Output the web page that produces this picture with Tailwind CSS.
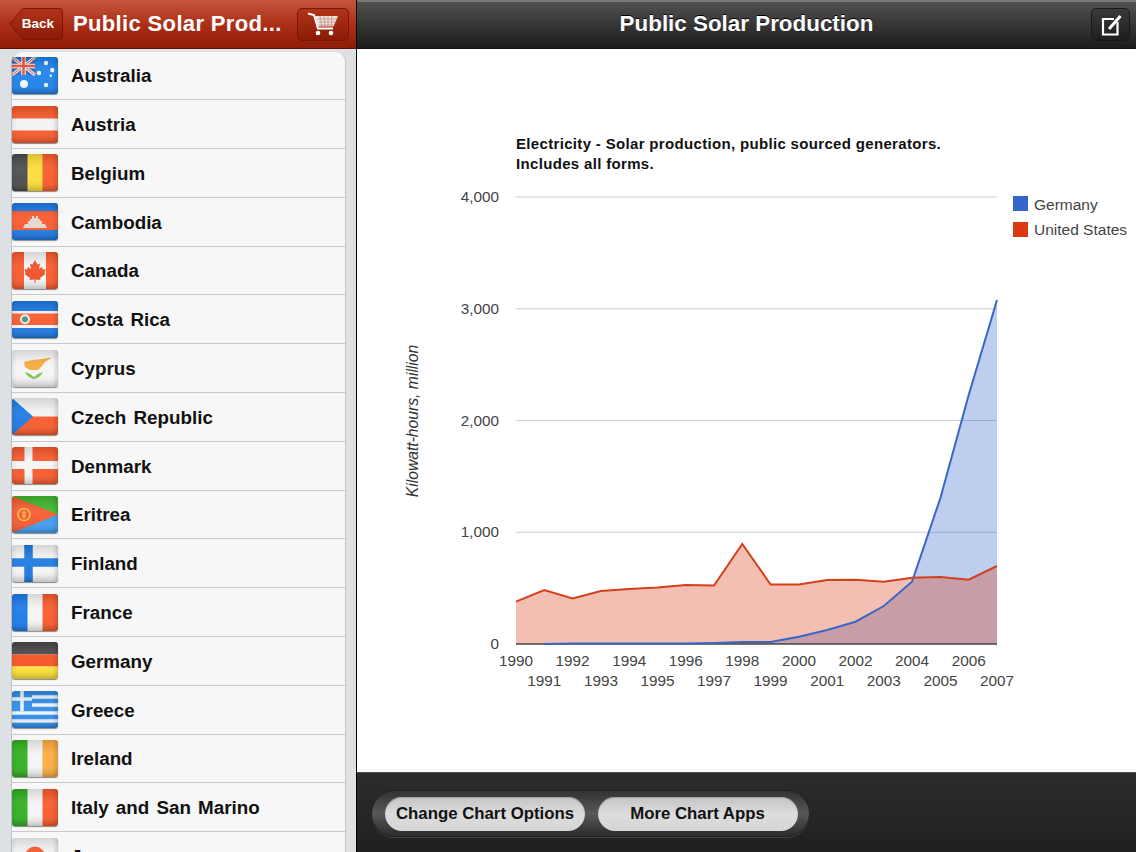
<!DOCTYPE html>
<html lang="en">
<head>
<meta charset="utf-8">
<title>Public Solar Production</title>
<script src="https://cdn.jsdelivr.net/npm/@tailwindcss/browser@4"></script>
</head>
<body class="bg-black">
<svg class="absolute w-0 h-0" aria-hidden="true"><defs>
<linearGradient id="gl" x1="0" y1="0" x2="0" y2="1"><stop offset="0" stop-color="#000" stop-opacity=".13"/><stop offset=".4" stop-color="#fff" stop-opacity=".08"/><stop offset=".7" stop-color="#fff" stop-opacity=".05"/><stop offset="1" stop-color="#000" stop-opacity=".22"/></linearGradient>
<linearGradient id="gs" x1="0" y1="0" x2="1" y2="0"><stop offset="0" stop-color="#000" stop-opacity=".06"/><stop offset=".12" stop-color="#000" stop-opacity="0"/><stop offset=".88" stop-color="#000" stop-opacity="0"/><stop offset="1" stop-color="#000" stop-opacity=".14"/></linearGradient>
<g id="ov"><rect width="46" height="37" fill="url(#gl)"/><rect width="46" height="37" fill="url(#gs)"/></g>
</defs></svg>
<div class="flex w-[1136px] h-[852px] overflow-hidden font-['Liberation_Sans',Arial,sans-serif]">

  <!-- Sidebar -->
  <aside class="flex flex-col w-[356px] h-full shrink-0 bg-[#dde1e3]">
    <header class="flex items-center h-[49px] shrink-0 pl-[9px] pr-[7px] bg-gradient-to-b from-[#c4553c] via-[#ad2f17] to-[#8f1c06] border-b border-[#5e1004]">
      <a class="relative flex items-center justify-end w-[54px] h-[32px] pr-[9px] text-[13.500px] font-bold text-white">
        <svg class="absolute inset-0" width="54" height="32" viewBox="0 0 54 32"><defs><linearGradient id="bk" x1="0" y1="0" x2="0" y2="1"><stop offset="0" stop-color="#b23419"/><stop offset="1" stop-color="#8a1a06"/></linearGradient></defs><path d="M.8 16 13 1.500Q14 .5 16 .5H50Q53.500.5 53.500 4V28Q53.500 31.500 50 31.500H16Q14 31.500 13 30.500Z" fill="url(#bk)" stroke="#7a1605"/></svg>
        <span class="relative">Back</span>
      </a>
      <h2 class="ml-[10px] w-[215px] text-[22px] leading-none font-bold text-white tracking-[.35px] whitespace-nowrap">Public Solar Prod...</h2>
      <button class="flex items-center justify-center ml-auto w-[52px] h-[33px] rounded-[5px] border border-[#7a1605] bg-gradient-to-b from-[#b23419] to-[#8a1a06]">
        <svg width="32" height="24" viewBox="0 0 32 24"><path d="M1 1.500 7 3l4 13.500h15" fill="none" stroke="#fff" stroke-width="2"/><path d="M7.500 4H31l-4.500 10.500H10.500Z" fill="#eee3df"/><path d="M11 7H29.500M11.500 10H28M12 13H27M13 4l2 11M17 4l1 11M21 4v11M25 4l-1 11" stroke="#b0604c" stroke-width=".5" fill="none"/><circle cx="11" cy="21" r="2.300" fill="#fff"/><circle cx="24" cy="21" r="2.300" fill="#fff"/></svg>
      </button>
    </header>
    <ul class="ml-[12px] mr-[10px] mt-[2.500px] bg-[#f7f7f7] rounded-t-[10px] border-r border-[#c2c6c8] shadow-[-1px_0_0_#bfc4c7]">
      <li class="flex items-center h-[48.800px] border-b border-[#c9c9c9] gap-[13px] text-[18.800px] [word-spacing:2px] font-bold text-[#111]"><svg class="w-[46px] h-[37px] rounded-[3px] shadow-[0_1px_1px_rgba(0,0,0,.45)] shrink-0" viewBox="0 0 46 37"><rect width="46" height="37" fill="#1c80ea"/><rect width="23" height="18" fill="#2c67b8"/><path d="M0 0 23 18M23 0 0 18" stroke="#f2e6e0" stroke-width="3"/><path d="M0 0 23 18M23 0 0 18" stroke="#e8503a" stroke-width="1"/><path d="M11.500 0V18M0 9H23" stroke="#f5f0ee" stroke-width="4.500"/><path d="M11.500 0V18M0 9H23" stroke="#e8503a" stroke-width="2.500"/><circle cx="12" cy="27" r="4" fill="#f4f8ff"/><circle cx="34" cy="6" r="2.200" fill="#eef6ff"/><circle cx="40.300" cy="13" r="2.200" fill="#eef6ff"/><circle cx="27" cy="16" r="2.200" fill="#eef6ff"/><circle cx="38.700" cy="18.700" r="1.200" fill="#eef6ff"/><circle cx="34" cy="28" r="2.200" fill="#eef6ff"/><use href="#ov"/></svg><span class="pt-[2px]">Australia</span></li>
      <li class="flex items-center h-[48.800px] border-b border-[#c9c9c9] gap-[13px] text-[18.800px] [word-spacing:2px] font-bold text-[#111]"><svg class="w-[46px] h-[37px] rounded-[3px] shadow-[0_1px_1px_rgba(0,0,0,.45)] shrink-0" viewBox="0 0 46 37"><rect width="46" height="37" fill="#f7582a"/><rect y="12.500" width="46" height="12" fill="#f2f2f2"/><use href="#ov"/></svg><span class="pt-[2px]">Austria</span></li>
      <li class="flex items-center h-[48.800px] border-b border-[#c9c9c9] gap-[13px] text-[18.800px] [word-spacing:2px] font-bold text-[#111]"><svg class="w-[46px] h-[37px] rounded-[3px] shadow-[0_1px_1px_rgba(0,0,0,.45)] shrink-0" viewBox="0 0 46 37"><rect width="16" height="37" fill="#4a4a4a"/><rect x="15.500" width="15.500" height="37" fill="#fbdc35"/><rect x="30.500" width="15.500" height="37" fill="#f9592a"/><use href="#ov"/></svg><span class="pt-[2px]">Belgium</span></li>
      <li class="flex items-center h-[48.800px] border-b border-[#c9c9c9] gap-[13px] text-[18.800px] [word-spacing:2px] font-bold text-[#111]"><svg class="w-[46px] h-[37px] rounded-[3px] shadow-[0_1px_1px_rgba(0,0,0,.45)] shrink-0" viewBox="0 0 46 37"><rect width="46" height="37" fill="#1c78e2"/><rect y="8" width="46" height="19" fill="#f7582a"/><path d="M11 25 13 21H16V18H18V16H20V13H22V15H24V13H26V16H28V18H30V21H33L35 25Z" fill="#e4d6ce"/><use href="#ov"/></svg><span class="pt-[2px]">Cambodia</span></li>
      <li class="flex items-center h-[48.800px] border-b border-[#c9c9c9] gap-[13px] text-[18.800px] [word-spacing:2px] font-bold text-[#111]"><svg class="w-[46px] h-[37px] rounded-[3px] shadow-[0_1px_1px_rgba(0,0,0,.45)] shrink-0" viewBox="0 0 46 37"><rect width="46" height="37" fill="#f4f4f4"/><rect width="12" height="37" fill="#f7582a"/><rect x="34" width="12" height="37" fill="#f7582a"/><path d="M23 8 25.500 12.500 28 11.500 27 17 30 15 31 17.500 33.500 17 32.500 21 33.500 22 28 26 28.500 28 23.500 27.500V31H22.500V27.500L17.500 28 18 26 12.500 22 13.500 21 12.500 17 15 17.500 16 15 19 17 18 11.500 20.500 12.500Z" fill="#ef4e22"/><use href="#ov"/></svg><span class="pt-[2px]">Canada</span></li>
      <li class="flex items-center h-[48.800px] border-b border-[#c9c9c9] gap-[13px] text-[18.800px] [word-spacing:2px] font-bold text-[#111]"><svg class="w-[46px] h-[37px] rounded-[3px] shadow-[0_1px_1px_rgba(0,0,0,.45)] shrink-0" viewBox="0 0 46 37"><rect width="46" height="37" fill="#1c78e2"/><rect y="10" width="46" height="17" fill="#f4f4f4"/><rect y="12.500" width="46" height="11.500" fill="#f7582a"/><circle cx="13" cy="18.300" r="5" fill="#e8efe8"/><circle cx="13" cy="18.300" r="3" fill="#4c8c84"/><use href="#ov"/></svg><span class="pt-[2px]">Costa Rica</span></li>
      <li class="flex items-center h-[48.800px] border-b border-[#c9c9c9] gap-[13px] text-[18.800px] [word-spacing:2px] font-bold text-[#111]"><svg class="w-[46px] h-[37px] rounded-[3px] shadow-[0_1px_1px_rgba(0,0,0,.45)] shrink-0" viewBox="0 0 46 37"><rect width="46" height="37" fill="#f4f4f4"/><path d="M12 12 20 10 30 9 40 7.500 33 12 30 16 26 20 18 20 13 17Z" fill="#f5a93a"/><path d="M13 22Q18 23 22 27 26 23 31 22 28 28 22 29 16 28 13 22Z" fill="#7fc050"/><use href="#ov"/></svg><span class="pt-[2px]">Cyprus</span></li>
      <li class="flex items-center h-[48.800px] border-b border-[#c9c9c9] gap-[13px] text-[18.800px] [word-spacing:2px] font-bold text-[#111]"><svg class="w-[46px] h-[37px] rounded-[3px] shadow-[0_1px_1px_rgba(0,0,0,.45)] shrink-0" viewBox="0 0 46 37"><rect width="46" height="18.500" fill="#f2f2f2"/><rect y="18.500" width="46" height="18.500" fill="#f7582a"/><path d="M0 0 21 18.500 0 37Z" fill="#1c78e2"/><use href="#ov"/></svg><span class="pt-[2px]">Czech Republic</span></li>
      <li class="flex items-center h-[48.800px] border-b border-[#c9c9c9] gap-[13px] text-[18.800px] [word-spacing:2px] font-bold text-[#111]"><svg class="w-[46px] h-[37px] rounded-[3px] shadow-[0_1px_1px_rgba(0,0,0,.45)] shrink-0" viewBox="0 0 46 37"><rect width="46" height="37" fill="#f7582a"/><path d="M0 18H46M16.500 0V37" stroke="#f4f4f4" stroke-width="8"/><use href="#ov"/></svg><span class="pt-[2px]">Denmark</span></li>
      <li class="flex items-center h-[48.800px] border-b border-[#c9c9c9] gap-[13px] text-[18.800px] [word-spacing:2px] font-bold text-[#111]"><svg class="w-[46px] h-[37px] rounded-[3px] shadow-[0_1px_1px_rgba(0,0,0,.45)] shrink-0" viewBox="0 0 46 37"><rect width="46" height="18.500" fill="#3eb52e"/><rect y="18.500" width="46" height="18.500" fill="#3f9cf2"/><path d="M0 0 46 18.500 0 37Z" fill="#f4582c"/><circle cx="12" cy="18.500" r="6" fill="none" stroke="#f8c04a" stroke-width="1.500"/><path d="M12 14.500V22.500M10 17H14M10 20H14" stroke="#f8c04a"/><use href="#ov"/></svg><span class="pt-[2px]">Eritrea</span></li>
      <li class="flex items-center h-[48.800px] border-b border-[#c9c9c9] gap-[13px] text-[18.800px] [word-spacing:2px] font-bold text-[#111]"><svg class="w-[46px] h-[37px] rounded-[3px] shadow-[0_1px_1px_rgba(0,0,0,.45)] shrink-0" viewBox="0 0 46 37"><rect width="46" height="37" fill="#f4f4f4"/><path d="M0 17.500H46M16.500 0V37" stroke="#1a78e0" stroke-width="8.500"/><use href="#ov"/></svg><span class="pt-[2px]">Finland</span></li>
      <li class="flex items-center h-[48.800px] border-b border-[#c9c9c9] gap-[13px] text-[18.800px] [word-spacing:2px] font-bold text-[#111]"><svg class="w-[46px] h-[37px] rounded-[3px] shadow-[0_1px_1px_rgba(0,0,0,.45)] shrink-0" viewBox="0 0 46 37"><rect width="46" height="37" fill="#f4f4f4"/><rect width="15.500" height="37" fill="#1a78e8"/><rect x="30.500" width="15.500" height="37" fill="#f7582a"/><use href="#ov"/></svg><span class="pt-[2px]">France</span></li>
      <li class="flex items-center h-[48.800px] border-b border-[#c9c9c9] gap-[13px] text-[18.800px] [word-spacing:2px] font-bold text-[#111]"><svg class="w-[46px] h-[37px] rounded-[3px] shadow-[0_1px_1px_rgba(0,0,0,.45)] shrink-0" viewBox="0 0 46 37"><rect width="46" height="12.500" fill="#484848"/><rect y="12.500" width="46" height="12" fill="#f4501f"/><rect y="24.500" width="46" height="12.500" fill="#fde135"/><use href="#ov"/></svg><span class="pt-[2px]">Germany</span></li>
      <li class="flex items-center h-[48.800px] border-b border-[#c9c9c9] gap-[13px] text-[18.800px] [word-spacing:2px] font-bold text-[#111]"><svg class="w-[46px] h-[37px] rounded-[3px] shadow-[0_1px_1px_rgba(0,0,0,.45)] shrink-0" viewBox="0 0 46 37"><rect width="46" height="37" fill="#2d8aea"/><path d="M20 6H46M20 14H46M0 22H46M0 30H46" stroke="#eaf2fa" stroke-width="3.500"/><path d="M0 8H20M10 0V20" stroke="#eaf2fa" stroke-width="3.500"/><use href="#ov"/></svg><span class="pt-[2px]">Greece</span></li>
      <li class="flex items-center h-[48.800px] border-b border-[#c9c9c9] gap-[13px] text-[18.800px] [word-spacing:2px] font-bold text-[#111]"><svg class="w-[46px] h-[37px] rounded-[3px] shadow-[0_1px_1px_rgba(0,0,0,.45)] shrink-0" viewBox="0 0 46 37"><rect width="46" height="37" fill="#f4f4f4"/><rect width="15.500" height="37" fill="#2fae1e"/><rect x="30.500" width="15.500" height="37" fill="#fbaa3c"/><use href="#ov"/></svg><span class="pt-[2px]">Ireland</span></li>
      <li class="flex items-center h-[48.800px] border-b border-[#c9c9c9] gap-[13px] text-[18.800px] [word-spacing:2px] font-bold text-[#111]"><svg class="w-[46px] h-[37px] rounded-[3px] shadow-[0_1px_1px_rgba(0,0,0,.45)] shrink-0" viewBox="0 0 46 37"><rect width="46" height="37" fill="#f4f4f4"/><rect width="15.500" height="37" fill="#2fae1e"/><rect x="30.500" width="15.500" height="37" fill="#f7582a"/><use href="#ov"/></svg><span class="pt-[2px]">Italy and San Marino</span></li>
      <li class="flex items-center h-[48.800px] border-b border-[#c9c9c9] gap-[13px] text-[18.800px] [word-spacing:2px] font-bold text-[#111]"><svg class="w-[46px] h-[37px] rounded-[3px] shadow-[0_1px_1px_rgba(0,0,0,.45)] shrink-0" viewBox="0 0 46 37"><rect width="46" height="37" fill="#f4f4f4"/><circle cx="23" cy="18.500" r="10" fill="#f7582a"/><use href="#ov"/></svg><span class="pt-[2px]">Japan</span></li>
    </ul>
  </aside>

  <!-- Main -->
  <section class="flex flex-col flex-1 ml-px h-full min-w-0">
    <header class="relative flex items-center justify-center h-[49px] shrink-0 bg-gradient-to-b from-[#505050] via-[#363636] to-[#1c1c1c] border-t-2 border-t-[#777] border-b border-b-[#111]">
      <h1 class="-mt-[2px] text-[22.400px] leading-none font-bold text-white [text-shadow:0_-1px_0_#000]">Public Solar Production</h1>
      <button class="absolute right-[6px] top-[6px] flex items-center justify-center w-[39px] h-[33px] rounded-[5px] border border-[#1a1a1a] bg-gradient-to-b from-[#3a3a3a] to-[#1e1e1e]">
        <svg width="26" height="24" viewBox="0 0 26 24"><path d="M19.500 9V21.500H5V6H16" fill="none" stroke="#fff" stroke-width="2.200"/><path d="M11 16 22.500 3" stroke="#fff" stroke-width="3"/></svg>
      </button>
    </header>

    <main class="flex-1 min-h-0 bg-white">
      <svg class="w-full h-full" viewBox="357 49 779 723">
        <g class="text-[15px] tracking-[.33px] font-bold fill-[#111]">
          <text x="516" y="148.500">Electricity - Solar production, public sourced generators.</text>
          <text x="516" y="168.500">Includes all forms.</text>
        </g>
        <path d="M516 197H997M516 308.750H997M516 420.500H997M516 532.250H997" stroke="#ccc" stroke-width="1"/>
        <g class="text-[15.300px] fill-[#444]" text-anchor="end">
          <text x="499" y="202">4,000</text><text x="499" y="314">3,000</text><text x="499" y="426">2,000</text><text x="499" y="537">1,000</text><text x="499" y="649">0</text>
        </g>
        <text class="text-[15.700px] italic fill-[#333]" transform="translate(418 421) rotate(-90)" text-anchor="middle">Kilowatt-hours, million</text>
        <path d="M544.300 644 572.600 643.500 600.900 643.500 629.200 643.500 657.500 643.500 685.700 643.500 714 643 742.300 642 770.600 642 798.900 636.700 827.200 630 855.500 621.700 883.800 606 912 581.700 940.400 498 968.700 395 997 300V644Z" fill="#3366cc" fill-opacity=".32"/>
        <path d="M516 601.700 544.300 590 572.600 598.500 600.900 591 629.200 589 657.500 587.500 685.700 585 714 585.500 742.300 544 770.600 584.500 798.900 584.500 827.200 580 855.500 579.700 883.800 581.700 912 577.700 940.400 577 968.700 579.700 997 566V644H516Z" fill="#dc3912" fill-opacity=".32"/>
        <path d="M516 644H997" stroke="#444" stroke-width="1.500"/>
        <path d="M544.300 644 572.600 643.500 600.900 643.500 629.200 643.500 657.500 643.500 685.700 643.500 714 643 742.300 642 770.600 642 798.900 636.700 827.200 630 855.500 621.700 883.800 606 912 581.700 940.400 498 968.700 395 997 300" fill="none" stroke="#3a66c4" stroke-width="2"/>
        <path d="M516 601.700 544.300 590 572.600 598.500 600.900 591 629.200 589 657.500 587.500 685.700 585 714 585.500 742.300 544 770.600 584.500 798.900 584.500 827.200 580 855.500 579.700 883.800 581.700 912 577.700 940.400 577 968.700 579.700 997 566" fill="none" stroke="#d2401c" stroke-width="2"/>
        <g class="text-[15.300px] fill-[#444]" text-anchor="middle">
          <text x="516" y="666">1990</text><text x="572.600" y="666">1992</text><text x="629.200" y="666">1994</text><text x="685.700" y="666">1996</text><text x="742.300" y="666">1998</text><text x="798.900" y="666">2000</text><text x="855.500" y="666">2002</text><text x="912" y="666">2004</text><text x="968.700" y="666">2006</text>
          <text x="544.300" y="686">1991</text><text x="600.900" y="686">1993</text><text x="657.500" y="686">1995</text><text x="714" y="686">1997</text><text x="770.600" y="686">1999</text><text x="827.200" y="686">2001</text><text x="883.800" y="686">2003</text><text x="940.400" y="686">2005</text><text x="997" y="686">2007</text>
        </g>
        <rect x="1013" y="196" width="15" height="15" fill="#3366cc"/>
        <rect x="1013" y="222" width="15" height="15" fill="#dc3912"/>
        <g class="text-[15.500px] fill-[#444]">
          <text x="1034" y="209.500">Germany</text><text x="1034" y="235">United States</text>
        </g>
      </svg>
    </main>

    <footer class="flex items-center h-[80px] shrink-0 pl-[14px] pt-[2px] bg-gradient-to-b from-[#2c2c2c] to-[#202020] border-t border-[#4a4a4a]">
      <div class="flex items-center gap-[12.500px] h-[47px] pl-[13px] pr-[11px] rounded-full bg-gradient-to-b from-[#333] via-[#585858] to-[#2c2c2c] border border-[#222] shadow-[0_1px_0_#444]">
        <button class="w-[200px] h-[34px] rounded-full bg-gradient-to-b from-[#c4c4c4] via-[#dcdcdc] to-[#d6d6d6] text-[16.800px] font-bold text-[#111] shadow-[inset_0_1px_1px_#999]">Change Chart Options</button>
        <button class="w-[200px] h-[34px] rounded-full bg-gradient-to-b from-[#c4c4c4] via-[#dcdcdc] to-[#d6d6d6] text-[16.800px] font-bold text-[#111] shadow-[inset_0_1px_1px_#999]">More Chart Apps</button>
      </div>
    </footer>
  </section>
</div>
</body>
</html>
